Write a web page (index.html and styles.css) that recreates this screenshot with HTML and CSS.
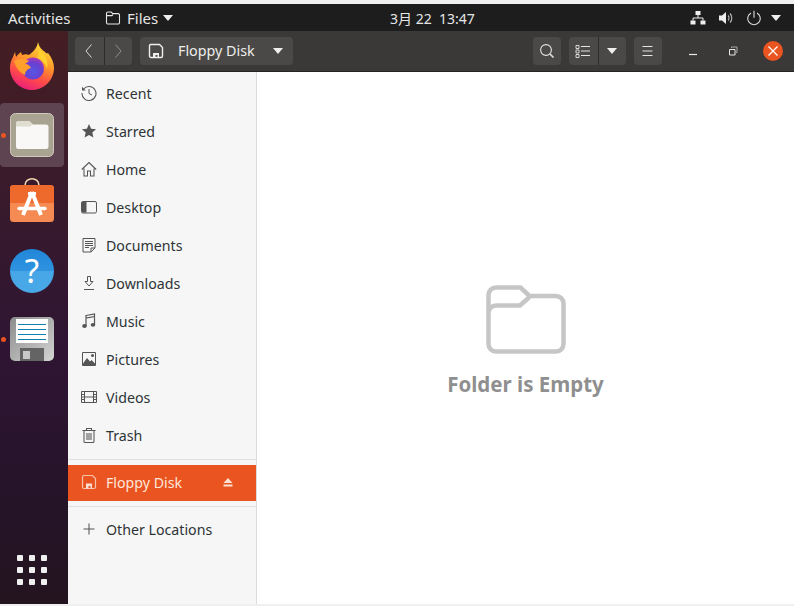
FILE: index.html
```html
<!DOCTYPE html>
<html lang="en">
<head>
<meta charset="utf-8">
<title>Floppy Disk - Files</title>
<link rel="stylesheet" href="styles.css">
</head>
<body>
<div class="screen">
  <header class="topbar">
    <div class="tb-left">
      <span class="activities">Activities</span>
      <span class="appmenu">
        <svg class="ic16" viewBox="0 0 16 16"><path d="M1.500 3.500a1.500 1.500 0 0 1 1.500-1.500h3.200l1.600 1.600h5.200a1.500 1.500 0 0 1 1.500 1.500v7.400a1.500 1.500 0 0 1-1.500 1.500H3a1.500 1.500 0 0 1-1.500-1.500zM1.500 5.600h5.400l1-1" fill="none" stroke="#e8e8e8" stroke-width="1.100"/></svg>
        <span class="appname">Files</span>
        <span class="tri"></span>
      </span>
    </div>
    <div class="clock">3月 22&nbsp;&nbsp;13:47</div>
    <div class="tb-right">
      <svg class="ic16" viewBox="0 0 16 16"><path d="M5.500 1h5v4h-5zM0.500 10.500h5v4h-5zM10.500 10.500h5v4h-5z" fill="#eee"/><path d="M8 5v3M3 10.500V8h10v2.500" fill="none" stroke="#eee"/></svg>
      <svg class="ic16" viewBox="0 0 16 16"><path d="M1 5.500h3L8 2v12L4 10.500H1z" fill="#eee"/><path d="M10 5.500a3.500 3.500 0 0 1 0 5M12 3.500a6.500 6.500 0 0 1 0 9" fill="none" stroke="#bbb" stroke-width="1.100"/></svg>
      <svg class="ic16" viewBox="0 0 16 16"><path d="M5 2.900a6.300 6.300 0 1 0 6 0M8 .8v7" fill="none" stroke="#ddd" stroke-width="1.100"/></svg>
      <span class="tri tri-end"></span>
    </div>
  </header>
  <div class="desktop">
    <nav class="dock">
      <div class="dock-list">
        <div class="dock-item">
          <svg class="dock-ic ff" viewBox="0 0 44 48">
            <defs>
              <linearGradient id="ffo" x1="0.75" y1="0" x2="0.35" y2="1"><stop offset="0" stop-color="#ffe53c"/><stop offset=".4" stop-color="#ff9a2a"/><stop offset=".72" stop-color="#ff4a48"/><stop offset="1" stop-color="#e9207c"/></linearGradient>
              <radialGradient id="ffp" cx=".5" cy=".65" r=".6"><stop offset="0" stop-color="#5756e4"/><stop offset=".7" stop-color="#6a3fd0"/><stop offset="1" stop-color="#a33bb8"/></radialGradient>
            </defs>
            <path d="M28 0c1 5 4 8 7 10 1 1 2 2 3 1 4 5 6 10 6 15 0 12-10 22-22 22S0 38 0 26c0-4 1-8 3-11l2-5 1 5c1-2 3-3 5-5l1 3c3-1 5-1 7 0 4-3 8-7 9-13z" fill="url(#ffo)"/>
            <circle cx="23" cy="26.500" r="11" fill="url(#ffp)"/>
            <path d="M4 19c4-3 11-3 15 0l-4 3c3 0 5 2 6 4-4 1-6 4-6 7-5-2-9-7-11-14z" fill="#ffa02c"/>
            <path d="M28 7c6 4 11 9 9 20-1-5-5-9-10-11 2-3 2-5 1-9z" fill="#ffd02e"/>
          </svg>
        </div>
        <div class="dock-item active">
          <span class="run-dot"></span>
          <svg class="dock-ic" viewBox="0 0 44 44">
            <rect x=".5" y=".5" width="43" height="43" rx="5" fill="#a9a391" stroke="#cfcabb"/>
            <path d="M6 11a3 3 0 0 1 3-3h10l4 3.500H36a2.500 2.500 0 0 1 2.500 2.500v19.500a2.500 2.500 0 0 1-2.500 2.500H8.500A2.500 2.500 0 0 1 6 33.500z" fill="#faf8f6"/>
            <path d="M6 11a3 3 0 0 1 3-3h10l4 3.500-3 2H6z" fill="#dfdcd0"/>
          </svg>
        </div>
        <div class="dock-item">
          <svg class="dock-ic" viewBox="0 0 44 44">
            <path d="M15 4.500c0-9 14-9 14 0" fill="none" stroke="#f4d7b0" stroke-width="1.500"/>
            <rect y="4" width="44" height="37" rx="3.500" fill="#f58a52"/>
            <path d="M0 7.500A3.500 3.500 0 0 1 3.500 4h37A3.500 3.500 0 0 1 44 7.500V22H0z" fill="#ee6a2c"/>
            <path d="M22 11 13 34M22 11l9 23" fill="none" stroke="#fff" stroke-width="4"/>
            <path d="M9 27.500h26" stroke="#fff" stroke-width="3.500" stroke-linecap="round"/>
            <path d="M18 11h8v3h-8z" fill="#fff"/>
          </svg>
        </div>
        <div class="dock-item">
          <svg class="dock-ic" viewBox="0 0 44 44">
            <defs><linearGradient id="hb" x1="0" y1="0" x2="0" y2="1"><stop offset="0" stop-color="#2186d8"/><stop offset=".5" stop-color="#2f93e0"/><stop offset=".5" stop-color="#46a6e6"/><stop offset="1" stop-color="#48a8e8"/></linearGradient></defs>
            <circle cx="22" cy="22" r="22" fill="url(#hb)"/>
            <text x="22" y="33.500" class="help-q">?</text>
          </svg>
        </div>
        <div class="dock-item">
          <span class="run-dot"></span>
          <svg class="dock-ic" viewBox="0 0 44 44">
            <defs><linearGradient id="fl" x1="0" y1="0" x2="1" y2="1"><stop offset="0" stop-color="#8b8b8b"/><stop offset="1" stop-color="#d4d4d4"/></linearGradient></defs>
            <rect width="44" height="44" rx="5" fill="url(#fl)"/>
            <rect x="6" y="2" width="32" height="24" fill="#fff"/>
            <path d="M8 7.500h28M8 12.500h28M8 17.500h28M8 22.500h28" stroke="#1180b0" stroke-width="1.200"/>
            <path d="M10 31h24v13H10z" fill="#646464"/>
            <rect x="13" y="34" width="7" height="8" fill="#c8c8c8"/>
          </svg>
        </div>
      </div>
      <div class="apps-grid"><i></i><i></i><i></i><i></i><i></i><i></i><i></i><i></i><i></i></div>
    </nav>
    <section class="window">
      <div class="headerbar">
        <div class="btn-group">
          <button class="hbtn w28"><svg class="ic16" viewBox="0 0 16 16"><path d="M10.500 1.500 5 8l5.500 6.500" fill="none" stroke="#d8d8d6"/></svg></button>
          <button class="hbtn w28"><svg class="ic16" viewBox="0 0 16 16"><path d="M5.500 1.500 11 8l-5.500 6.500" fill="none" stroke="#8f8e8c"/></svg></button>
        </div>
        <button class="hbtn pathbar">
          <svg class="ic16" viewBox="0 0 16 16"><path d="M2.500 1.500h9l3 3v8.500a1.500 1.500 0 0 1-1.500 1.500H3A1.500 1.500 0 0 1 1.500 13V3a1.500 1.500 0 0 1 1-1.500z" fill="none" stroke="#eee" stroke-width="1.400"/><path d="M5 10h6v4.500H9.500V12h-2v2.500H5z" fill="#eee"/></svg>
          <span class="path-label">Floppy Disk</span>
          <span class="tri"></span>
        </button>
        <div class="spacer"></div>
        <button class="hbtn w28 mr8"><svg class="ic16" viewBox="0 0 16 16"><circle cx="7" cy="7" r="5.400" fill="none" stroke="#e4e4e2" stroke-width="1.100"/><path d="m11 11 3.500 3.500" stroke="#e4e4e2" stroke-width="1.600"/></svg></button>
        <div class="btn-group mr8">
          <button class="hbtn w28"><svg class="ic16" viewBox="0 0 16 16"><path d="M1 2.500h3v3H1zM1 7h3v3H1zM1 11.500h3v3H1z" fill="none" stroke="#e4e4e2" stroke-width=".9"/><path d="M6 3.500h9M6 8h9M6 12.500h9" stroke="#e4e4e2"/></svg></button>
          <button class="hbtn w28"><span class="tri"></span></button>
        </div>
        <button class="hbtn w28"><svg class="ic16" viewBox="0 0 16 16"><path d="M2.500 3.500h10M2.500 8h10M2.500 12.500h10" stroke="#e4e4e2"/></svg></button>
        <div class="wm">
          <span class="wm-btn"><svg class="ic16" viewBox="0 0 16 16"><path d="M4 11.500h8" stroke="#e8e8e6" stroke-width="1.200"/></svg></span>
          <span class="wm-btn"><svg class="ic16" viewBox="0 0 16 16"><path d="M4.500 6.500h5.500v5.500H4.500z" fill="none" stroke="#e8e8e6"/><path d="M6.500 5V4h5.500v5.500h-1" fill="none" stroke="#a8a8a6"/></svg></span>
          <span class="wm-btn close"><svg class="ic16" viewBox="0 0 16 16"><path d="m3.500 3.500 9 9m0-9-9 9" stroke="#fff" stroke-width="1.300"/></svg></span>
        </div>
      </div>
      <div class="body">
        <aside class="sidebar">
          <ul class="places">
            <li class="place"><svg class="ic16" viewBox="0 0 16 16"><path d="M2.600 4A7 7 0 1 1 1 8" fill="none" stroke="#555" stroke-width="1.100"/><path d="M1 1.800v3.700h3.700z" fill="#555"/><path d="M8 4v4.500l3 1.500" fill="none" stroke="#555"/></svg><span>Recent</span></li>
            <li class="place"><svg class="ic16" viewBox="0 0 16 16"><path d="m8 1 2.100 4.700 5 .5-3.800 3.400 1.100 5L8 12l-4.400 2.600 1.100-5L.9 6.200l5-.5z" fill="#555"/></svg><span>Starred</span></li>
            <li class="place"><svg class="ic16" viewBox="0 0 16 16"><path d="M.8 8.500 8 1.500l7.200 7M3 7.500v7.500h3.500v-5h3v5H13V7.500" fill="none" stroke="#555" stroke-width="1.050"/></svg><span>Home</span></li>
            <li class="place"><svg class="ic16" viewBox="0 0 16 16"><rect x=".5" y="2.500" width="15" height="11.500" rx="1.500" fill="none" stroke="#555"/><path d="M1 3h4.500v10.500H1z" fill="#555"/></svg><span>Desktop</span></li>
            <li class="place"><svg class="ic16" viewBox="0 0 16 16"><path d="M2 1.500h12v9.500l-4 4H2zM14 11h-4v4" fill="none" stroke="#555"/><path d="M4 4.500h8M4 6.500h8M4 8.500h8M4 10.500h4" stroke="#555"/></svg><span>Documents</span></li>
            <li class="place"><svg class="ic16" viewBox="0 0 16 16"><path d="M6.500 1.500h3v5H12L8 11 4 6.500h2.500zM3 14.500h10" fill="none" stroke="#555"/></svg><span>Downloads</span></li>
            <li class="place"><svg class="ic16" viewBox="0 0 16 16"><path d="M5 3v10M13.500 1.500v10M5 2.500 13.500 1v2.500L5 5z" fill="none" stroke="#555" stroke-width="1.200"/><ellipse cx="3.500" cy="13" rx="2.300" ry="1.900" fill="#555"/><ellipse cx="12" cy="11.800" rx="2.300" ry="1.900" fill="#555"/></svg><span>Music</span></li>
            <li class="place"><svg class="ic16" viewBox="0 0 16 16"><path d="M1.500 1.500h13v13h-13z" fill="none" stroke="#555"/><path d="M2 12.500 6 7l3 3.500 1.500-1.500 3.500 3.500v2H2z" fill="#555"/><circle cx="11.500" cy="4.500" r="1.500" fill="#555"/></svg><span>Pictures</span></li>
            <li class="place"><svg class="ic16" viewBox="0 0 16 16"><path d="M.5 2.500h15v11H.5zM3.500 2.500v11M12.500 2.500v11M3.500 8h9M.5 5.500h3M.5 8h3M.5 10.500h3M12.500 5.500h3M12.500 8h3M12.500 10.500h3" fill="none" stroke="#555"/></svg><span>Videos</span></li>
            <li class="place"><svg class="ic16" viewBox="0 0 16 16"><path d="M1.500 3.500h13M5.500 3V1.500h5V3M3 4v10.500a1 1 0 0 0 1 1h8a1 1 0 0 0 1-1V4M6 6v7M8 6v7M10 6v7" fill="none" stroke="#555" stroke-width="1.050"/></svg><span>Trash</span></li>
          </ul>
          <div class="sep s-a"></div>
          <div class="place selected">
            <svg class="ic16 fd" viewBox="0 0 16 16"><path d="M2.500 1.500h9l3 3v8.500a1.500 1.500 0 0 1-1.500 1.500H3A1.500 1.500 0 0 1 1.500 13V3a1.500 1.500 0 0 1 1-1.500z" fill="none" stroke="#f7c2a8" stroke-width="1.200"/><path d="M5 9.500h6v5H9.500V12h-2v2.500H5z" fill="#fbe0d2"/></svg>
            <span class="grow">Floppy Disk</span>
            <svg class="eject" viewBox="0 0 10 10"><path d="M5 1 9.500 6h-9zM.5 7.500h9V9.500h-9z" fill="#fbe0d2"/></svg>
          </div>
          <div class="sep s-b"></div>
          <div class="place other"><svg class="ic16" viewBox="0 0 16 16"><path d="M8 2.500v11M2.500 8h11" stroke="#555" stroke-width="1.050"/></svg><span>Other Locations</span></div>
        </aside>
        <main class="content">
          <svg class="empty-ic" viewBox="0 0 80 70"><path d="M2.500 10a7.500 7.500 0 0 1 7.500-7.500h24.500l9 8.500H70a7.500 7.500 0 0 1 7.500 7.500v40.500a7.500 7.500 0 0 1-7.500 7.500H10a7.500 7.500 0 0 1-7.500-7.500z" fill="none" stroke="#c6c6c6" stroke-width="4.500"/><path d="M2.500 28a7.500 7.500 0 0 1 7.500-7.500h24l9.500-8.500" fill="none" stroke="#c6c6c6" stroke-width="4.500"/></svg>
          <p class="empty-text">Folder is Empty</p>
        </main>
      </div>
    </section>
  </div>
</div>
</body>
</html>
```
FILE: styles.css
```css
* { box-sizing: border-box; }
html, body { margin: 0; padding: 0; }
body { width: 794px; height: 606px; overflow: hidden; background: #f0f0f0; font-family: "Noto Sans", "Open Sans", sans-serif; }
.screen { display: flex; flex-direction: column; height: 604px; padding-top: 4px; }
.ic16 { width: 16px; height: 16px; flex: none; display: block; }
.tri { width: 0; height: 0; border-left: 5.5px solid transparent; border-right: 5.5px solid transparent; border-top: 6px solid #eeeeec; flex: none; display: block; }

.topbar { height: 27px; flex: none; background: #1d1d1d; color: #e6e6e6; font-size: 15px; display: flex; align-items: center; justify-content: space-between; padding: 0 13px 0 8px; position: relative; }
.tb-left { display: flex; align-items: center; }
.activities { width: 97px; }
.appmenu { display: flex; align-items: center; }
.appname { margin: 0 5px 0 6px; }
.clock { position: absolute; left: 390px; top: 5px; line-height: 19px; font-family: "Noto Sans", "Noto Sans CJK SC", sans-serif; font-size: 14px; white-space: nowrap; }
.tb-right { display: flex; align-items: center; gap: 12px; }
.tri-end { margin-left: -3px; }

.desktop { flex: 1; display: flex; min-height: 0; }
.dock { width: 68px; flex: none; background: linear-gradient(180deg, #451e23 0%, #3a1b2b 25%, #2f1533 55%, #26142a 80%, #23141f 100%); display: flex; flex-direction: column; justify-content: space-between; padding: 4px 0 19px; }
.dock-list { display: flex; flex-direction: column; gap: 4px; }
.dock-item { width: 64px; height: 64px; display: flex; align-items: center; justify-content: center; border-radius: 4px; position: relative; }
.dock-item.active { background: #5e4350; }
.dock-ic { width: 44px; height: 44px; display: block; overflow: visible; }
.dock-ic.ff { height: 48px; margin-top: -2px; }
.run-dot { position: absolute; left: 1px; top: 30px; width: 5px; height: 5px; border-radius: 50%; background: #e95420; }
.help-q { font-family: "Noto Sans", sans-serif; font-size: 33px; fill: #fff; text-anchor: middle; }
.apps-grid { width: 30px; margin-left: 17px; display: grid; grid-template-columns: repeat(3, 6px); grid-auto-rows: 6px; gap: 6px; }
.apps-grid i { background: #efefef; border-radius: 1px; }

.window { flex: 1; min-width: 0; display: flex; flex-direction: column; background: #fff; }
.headerbar { height: 41px; flex: none; background: #3a3937; border-bottom: 1px solid #262524; display: flex; align-items: center; padding: 0 11px 0 7px; color: #eeeeec; }
.btn-group { display: flex; border-radius: 4px; overflow: hidden; }
.btn-group .hbtn { border-radius: 0; }
.btn-group .hbtn + .hbtn { border-left: 1px solid #2c2b2a; }
.hbtn { height: 28px; border: 0; padding: 0; background: #4a4947; color: #eeeeec; border-radius: 4px; display: flex; align-items: center; justify-content: center; font: inherit; font-size: 14.3px; }
.w28 { width: 28px; }
.btn-group .w28 { width: 28.5px; }
.mr8 { margin-right: 8px; }
.pathbar { width: 153px; margin-left: 8px; padding: 0 10px 0 8px; justify-content: flex-start; }
.path-label { margin-left: 14px; flex: 1; text-align: left; padding-bottom: 2px; }
.spacer { flex: 1; }
.wm { display: flex; margin-left: 11px; }
.wm-btn { width: 40px; height: 28px; display: flex; align-items: center; justify-content: center; }
.wm-btn.close { width: 20px; height: 20px; margin: 4px 0 0 10px; border-radius: 50%; background: #e95420; }

.body { flex: 1; display: flex; min-height: 0; }
.sidebar { width: 189px; flex: none; background: #f6f6f6; border-right: 1px solid #dcdcdc; padding-top: 2px; color: #2e3436; font-size: 14.2px; }
.places { list-style: none; margin: 0; padding: 0; }
.place { height: 38px; display: flex; align-items: center; gap: 9px; padding-left: 13px; }
.sep { height: 1px; background: #e0e0e0; }
.s-a { margin-top: 5px; margin-bottom: 5px; }
.s-b { margin-top: 5px; }
.place.selected { height: 36px; background: #e95420; color: #fde6db; padding-right: 23px; padding-bottom: 2px; }
.grow { flex: 1; }
.eject { width: 10px; height: 10px; flex: none; }
.place.other { height: 46px; padding-bottom: 2px; }

.content { flex: 1; display: flex; flex-direction: column; align-items: center; padding-top: 213px; }
.empty-ic { width: 80px; height: 70px; display: block; }
.empty-text { margin: 16px 0 0; font-size: 20.5px; line-height: 26px; font-weight: 700; color: #8f8f8f; }
```
